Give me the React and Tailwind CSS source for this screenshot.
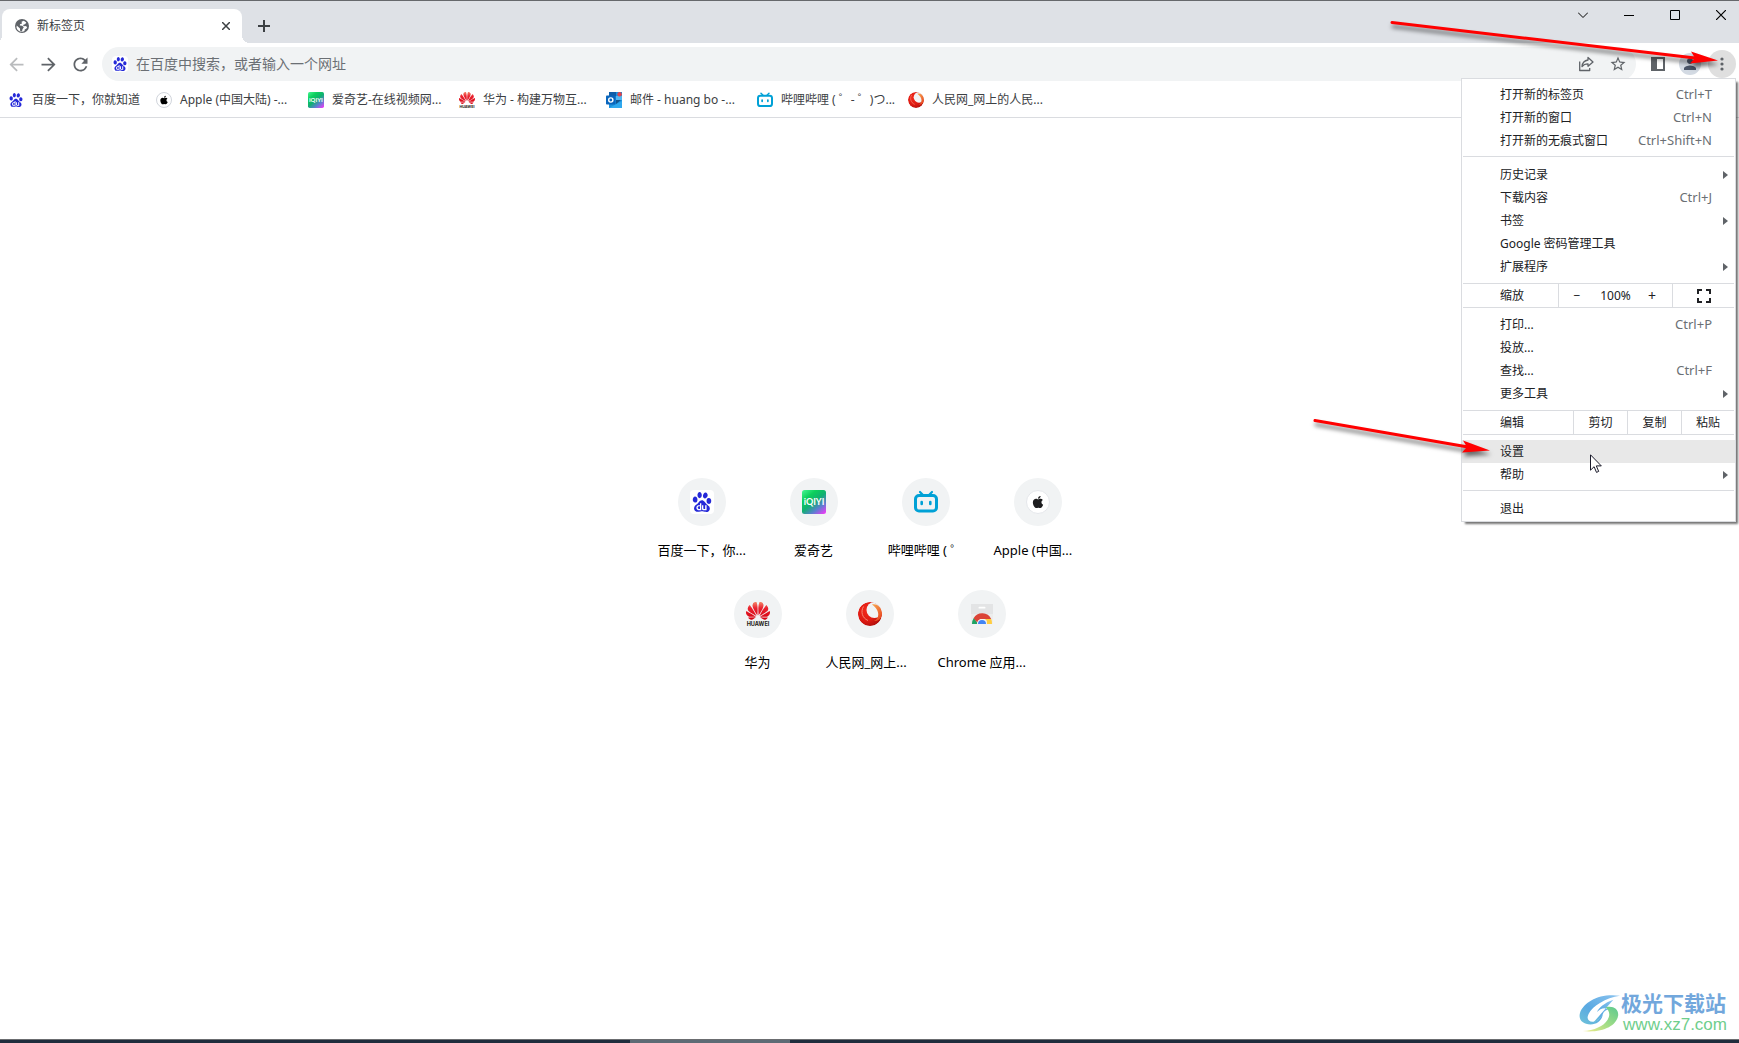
import React from "react";
import { MdArrowBack, MdArrowForward, MdRefresh, MdStarBorder, MdPerson } from "react-icons/md";
import { SiBaidu, SiHuawei } from "react-icons/si";
import { FaApple } from "react-icons/fa";

function BaiduIcon({ large }) {
  return (
    <span className={large ? "grid size-6 place-items-center rounded-sm bg-white" : "grid size-4 place-items-center rounded-sm bg-white"}>
      <SiBaidu className={large ? "size-5 text-[#2529d8]" : "size-3.5 text-[#2529d8]"} />
    </span>
  );
}

function AppleIcon({ large }) {
  return (
    <span className={large ? "grid size-6 place-items-center rounded-full border border-gray-200 bg-white" : "grid size-4 place-items-center rounded-full border border-gray-300 bg-white"}>
      <FaApple className={large ? "size-3.5 text-[#1d1d1f]" : "size-2.5 text-black"} />
    </span>
  );
}

function IqiyiIcon({ large }) {
  return (
    <svg viewBox="0 0 24 24" className={large ? "size-6" : "size-4"} aria-hidden="true">
      <defs>
        <linearGradient id="iqiyi" x1="0.1" y1="0" x2="0.9" y2="1">
          <stop offset="0" stopColor="#3df08a" />
          <stop offset="0.25" stopColor="#0ccf5c" />
          <stop offset="0.5" stopColor="#10b070" />
          <stop offset="0.75" stopColor="#5b7fd0" />
          <stop offset="1" stopColor="#e93df5" />
        </linearGradient>
      </defs>
      <rect width="24" height="24" rx="2.5" fill="url(#iqiyi)" />
      <text x="12" y="15.2" textAnchor="middle" fontSize="9" fontWeight="700" fontFamily="Lato, sans-serif" fill="#fff">iQIYI</text>
    </svg>
  );
}

function BiliIcon({ large }) {
  return (
    <svg viewBox="0 0 24 24" className={large ? "size-6" : "size-4"} fill="none" stroke="#00a1d6" strokeLinecap="round" aria-hidden="true">
      <rect x="1.5" y="5.5" width="21" height="15.5" rx="3.5" strokeWidth="3" />
      <path d="M6 2l3 3M18 2l-3 3" strokeWidth="2.2" />
      <path d="M7.7 12v2M16.3 12v2" strokeWidth="2.6" />
    </svg>
  );
}

function HuaweiIcon({ large }) {
  return (
    <svg viewBox="0 0 24 24" className={large ? "size-6" : "size-4"} aria-hidden="true">
      <defs>
        <linearGradient id="petals" x1="0.5" y1="0" x2="0.5" y2="1">
          <stop offset="0" stopColor="#f58a6c" />
          <stop offset="0.35" stopColor="#ea2330" />
          <stop offset="1" stopColor="#d5000f" />
        </linearGradient>
      </defs>
      <svg x="0" y="-3.2" width="24" height="24" viewBox="0 0 24 24">
        <SiHuawei size={24} style={{ fill: "url(#petals)" }} />
      </svg>
      <text x="12" y="24" textAnchor="middle" fontSize="5.6" fontWeight="700" fontFamily="Inter, sans-serif" fill="#231815">HUAWEI</text>
    </svg>
  );
}

function PeopleIcon({ large }) {
  return (
    <svg viewBox="0 0 24 24" className={large ? "size-6" : "size-4"} aria-hidden="true">
      <defs>
        <radialGradient id="ball" cx="0.35" cy="0.35" r="0.75">
          <stop offset="0" stopColor="#f2291b" />
          <stop offset="0.6" stopColor="#dd1a12" />
          <stop offset="1" stopColor="#a80d0b" />
        </radialGradient>
        <linearGradient id="flare" x1="0.2" y1="0" x2="0.8" y2="1">
          <stop offset="0" stopColor="#f6a04d" />
          <stop offset="1" stopColor="#e8401c" />
        </linearGradient>
        <clipPath id="disc">
          <circle cx="12" cy="12" r="12" />
        </clipPath>
      </defs>
      <g clipPath="url(#disc)">
        <circle cx="12" cy="12" r="12" fill="url(#ball)" />
        <circle cx="16.5" cy="8" r="8" fill="#f1f3f4" />
        <path d="M14 2.500C19 1 25 6 24 13c-1 4-4 6-8 6 5-2 7-10-2-16.500z" fill="url(#flare)" />
        <path d="M5.500 4.500c-3 5-1.500 11.500 4.500 14" fill="none" stroke="#f9a08c" strokeWidth="0.8" />
      </g>
    </svg>
  );
}

function OutlookIcon() {
  return (
    <svg viewBox="0 0 16 16" className="size-4" aria-hidden="true">
      <path d="M3 0h13v16H3z" fill="#1a91dd" />
      <path d="M3 0h7v4H3z" fill="#0f5da8" />
      <path d="M10 4h6v4h-6z" fill="#50b7f2" />
      <path d="M3 16l13-7v7z" fill="#2fa8ee" />
      <path d="M10 8h5l-5 4z" fill="#12548f" />
      <rect y="3.5" width="9.5" height="9" rx="0.8" fill="#0a66bd" />
      <circle cx="4.8" cy="8" r="2.1" fill="none" stroke="#fff" strokeWidth="1.4" />
      <circle cx="13.6" cy="2.2" r="2.2" fill="#e0434b" />
    </svg>
  );
}

function WebStoreIcon() {
  return (
    <svg viewBox="0 0 24 24" className="size-6" aria-hidden="true">
      <rect x="1" y="2" width="22" height="20" fill="#eceded" />
      <rect x="1" y="2" width="22" height="10" fill="#e3e4e5" />
      <rect x="8.5" y="4.8" width="7" height="1.8" rx="0.9" fill="#fff" />
      <path d="M2 22a10 10 0 0 1 2-6.3L8 22z" fill="#1fa463" />
      <path d="M3.6 16.2A10 10 0 0 1 21.2 17H12a5 5 0 0 0-4.7 3.6z" fill="#db4437" />
      <path d="M21.2 17a10 10 0 0 1 .8 5h-6l1-3-2-2z" fill="#ffcd40" />
      <path d="M7 22a5 5 0 0 1 10 0z" fill="#f5f5f5" />
      <path d="M8 22a4 4 0 0 1 8 0z" fill="#4285f4" />
    </svg>
  );
}

function GlobeIcon() {
  return (
    <svg viewBox="0 0 14 14" className="size-3.5" aria-hidden="true">
      <circle cx="7" cy="7" r="7" fill="#5f6368" />
      <path d="M8.800 1.800L6.500 2.800 7 4.500 5 5.200 4.800 6.500l2.400.3 1.600 1.500-1.300 2L7 12.300 5.200 12 5 9.500 1.700 6.500 1.500 8.500C2 11 4 12.800 7 12.800c1 0 1.800-.3 2.500-.7l.2-1.600 1.800-.9.7-1.500-1.700-1-1.800.2L8 5.900l2.300-.8 1-1.700z" fill="#fff" />
    </svg>
  );
}

const bookmarks = [
  { icon: <BaiduIcon />, title: "百度一下，你就知道", fit: "w-[108px]" },
  { icon: <AppleIcon />, title: "Apple (中国大陆) -...", fit: "w-28" },
  { icon: <IqiyiIcon />, title: "爱奇艺-在线视频网...", fit: "w-[111px]" },
  { icon: <HuaweiIcon />, title: "华为 - 构建万物互...", fit: "w-[107px]" },
  { icon: <OutlookIcon />, title: "邮件 - huang bo -...", fit: "w-[111px]" },
  { icon: <BiliIcon />, title: "哔哩哔哩 ( ゜- ゜)つ...", fit: "w-[111px]" },
  { icon: <PeopleIcon />, title: "人民网_网上的人民...", fit: "w-[111px]" },
];

const shortcuts = [
  [
    { icon: <BaiduIcon large />, title: "百度一下，你..." },
    { icon: <IqiyiIcon large />, title: "爱奇艺", center: true },
    { icon: <BiliIcon large />, title: "哔哩哔哩 ( ゜", center: true },
    { icon: <AppleIcon large />, title: "Apple (中国..." },
  ],
  [
    { icon: <HuaweiIcon large />, title: "华为", center: true },
    { icon: <PeopleIcon large />, title: "人民网_网上..." },
    { icon: <WebStoreIcon />, title: "Chrome 应用..." },
  ],
];

function MenuItem({ label, keys, sub, active }) {
  return (
    <button
      role="menuitem"
      className={
        active
          ? "flex h-[23px] w-full items-center justify-between bg-[#e8e8e8] pl-[38px] text-left"
          : "flex h-[23px] w-full items-center justify-between pl-[38px] text-left"
      }
    >
      <span>{label}</span>
      {keys && <span className="pr-[23px] text-[13px] text-[#6b6f74]">{keys}</span>}
      {sub && (
        <svg viewBox="0 0 5 8" className="mr-[7px] h-2 w-[5px]" fill="#5f6368" aria-hidden="true">
          <path d="M0 0l5 4-5 4z" />
        </svg>
      )}
    </button>
  );
}

function Separator() {
  return <div role="separator" className="mx-px mt-1 mb-1.5 h-px bg-[#dadce0]" />;
}

function Menu() {
  return (
    <div
      role="menu"
      className="absolute top-full right-0 z-10 w-[275px] border border-[#dadce0] bg-white pt-1 pb-px text-xs text-[#202124] shadow-[3px_3px_2px_-1px_rgba(0,0,0,0.55)]"
    >
      <MenuItem label="打开新的标签页" keys="Ctrl+T" />
      <MenuItem label="打开新的窗口" keys="Ctrl+N" />
      <MenuItem label="打开新的无痕式窗口" keys="Ctrl+Shift+N" />
      <Separator />
      <MenuItem label="历史记录" sub />
      <MenuItem label="下载内容" keys="Ctrl+J" />
      <MenuItem label="书签" sub />
      <MenuItem label="Google 密码管理工具" />
      <MenuItem label="扩展程序" sub />
      <div className="mx-px mt-[5px] mb-[5px] flex h-[25px] items-stretch border-y border-[#dadce0]">
        <span className="flex flex-1 items-center pl-[37px]">缩放</span>
        <div className="flex w-[115px] items-center justify-between border-x border-[#dadce0] px-3.5">
          <button aria-label="缩小" className="w-2">−</button>
          <span className="pl-1">100%</span>
          <button aria-label="放大" className="w-3 text-sm">+</button>
        </div>
        <button aria-label="全屏" className="grid w-[61px] place-items-center">
          <svg viewBox="0 0 14 14" className="size-3.5" fill="none" stroke="#202124" strokeWidth="2" aria-hidden="true">
            <path d="M1 5V1h4M9 1h4v4M13 9v4H9M5 13H1V9" />
          </svg>
        </button>
      </div>
      <MenuItem label="打印..." keys="Ctrl+P" />
      <MenuItem label="投放..." />
      <MenuItem label="查找..." keys="Ctrl+F" />
      <MenuItem label="更多工具" sub />
      <div className="mx-px mt-[5px] mb-[5px] flex h-[25px] items-stretch border-y border-[#dadce0]">
        <span className="flex flex-1 items-center pl-[37px]">编辑</span>
        <button className="w-[54px] border-l border-[#dadce0]">剪切</button>
        <button className="w-[54px] border-l border-[#dadce0]">复制</button>
        <button className="w-[53px] border-l border-[#dadce0]">粘贴</button>
      </div>
      <div className="relative">
        <MenuItem label="设置" active />
        <svg viewBox="0 0 12 19" className="absolute top-3.5 left-32 z-10 h-[19px] w-3" fill="#fff" stroke="#1a1a2a" aria-hidden="true">
          <path d="M.5.8v15.400l3.600-3.500 2.400 5.700 2.200-1-2.400-5.500h5z" />
        </svg>
        <svg viewBox="0 0 190 50" className="pointer-events-none absolute -top-6 right-[244px] h-[50px] w-[190px] drop-shadow-[1px_4px_2px_rgba(0,0,0,0.55)]" aria-hidden="true">
          <path d="M14 4.500L167 31" stroke="#f00" strokeWidth="3" strokeLinecap="round" />
          <path d="M162 24.500l27 10-28 2 5-5.500z" fill="#f00" />
        </svg>
      </div>
      <MenuItem label="帮助" sub />
      <Separator />
      <MenuItem label="退出" />
    </div>
  );
}

function TabStrip() {
  return (
    <div className="flex h-[43px] border-t border-[#66686c] bg-[#dee1e6] pl-0.5">
      <div className="relative mt-2 flex w-60 items-center rounded-t-lg bg-white pr-2 pl-[13px]">
        <GlobeIcon />
        <span className="flex-1 pl-2 text-xs text-[#3c4043]">新标签页</span>
        <button aria-label="关闭标签页" className="grid size-4 place-items-center">
          <svg viewBox="0 0 8 8" className="size-2" stroke="#3c4043" strokeWidth="1.500" aria-hidden="true">
            <path d="M0 0l8 8M8 0L0 8" />
          </svg>
        </button>
        <span className="absolute bottom-0 -left-2 size-2 bg-[radial-gradient(circle_at_0_0,transparent_8px,white_8px)]" />
        <span className="absolute -right-2 bottom-0 size-2 bg-[radial-gradient(circle_at_100%_0,transparent_8px,white_8px)]" />
      </div>
      <button aria-label="打开新的标签页" className="mt-2 ml-2 grid w-7 place-items-center">
        <svg viewBox="0 0 12 12" className="size-3" stroke="#3c4043" strokeWidth="2" aria-hidden="true">
          <path d="M6 0v12M0 6h12" />
        </svg>
      </button>
      <div className="ml-auto flex h-7 text-black">
        <button aria-label="搜索标签页" className="flex w-[46px] items-center justify-end pr-[13px]">
          <svg viewBox="0 0 10 10" className="size-2.5" fill="none" stroke="currentColor" aria-hidden="true">
            <path d="M0 2.500l5 5 5-5" />
          </svg>
        </button>
        <button aria-label="最小化" className="flex w-[46px] items-center justify-end pr-[13px]">
          <svg viewBox="0 0 10 10" className="size-2.5" stroke="currentColor" aria-hidden="true">
            <path d="M0 5.500h10" />
          </svg>
        </button>
        <button aria-label="最大化" className="flex w-[46px] items-center justify-end pr-[13px]">
          <svg viewBox="0 0 10 10" className="size-2.5" fill="none" stroke="currentColor" aria-hidden="true">
            <path d="M.5.5h9v9h-9z" />
          </svg>
        </button>
        <button aria-label="关闭" className="flex w-[46px] items-center justify-end pr-[13px]">
          <svg viewBox="0 0 10 10" className="size-2.5" stroke="currentColor" strokeWidth="1.200" aria-hidden="true">
            <path d="M0 0l10 10M10 0L0 10" />
          </svg>
        </button>
      </div>
    </div>
  );
}

function Toolbar() {
  return (
    <div className="flex items-center pt-1 pr-[3px]">
      <button aria-label="后退" className="grid w-8 place-items-center text-[#babcbe]">
        <MdArrowBack className="size-[21px]" />
      </button>
      <button aria-label="前进" className="grid w-8 place-items-center text-[#5f6368]">
        <MdArrowForward className="size-[21px]" />
      </button>
      <button aria-label="重新加载" className="grid w-8 place-items-center text-[#5f6368]">
        <MdRefresh className="size-[21px]" />
      </button>
      <div className="ml-1.5 flex h-[34px] flex-1 items-center gap-1 rounded-full bg-[#f1f3f4] pr-1 pl-2.5">
        <BaiduIcon />
        <input
          aria-label="地址栏"
          placeholder="在百度中搜索，或者输入一个网址"
          className="min-w-0 flex-1 bg-transparent pl-1 text-sm outline-none placeholder:text-[#6b6f74]"
        />
        <button aria-label="分享" className="grid size-7 place-items-center">
          <svg viewBox="0 0 16 16" className="size-4" fill="none" stroke="#5f6368" strokeWidth="1.300" strokeLinejoin="round" aria-hidden="true">
            <path d="M1.700 5.500v9h10v-2.500" />
            <path d="M10 1.500l5 4.500-5 4.200V7.800c-3 0-4.500.8-6 2.700.4-3.600 2.500-6 6-6.500z" />
          </svg>
        </button>
        <button aria-label="为此页添加书签" className="grid size-7 place-items-center text-[#5f6368]">
          <MdStarBorder className="size-[18px]" />
        </button>
      </div>
      <div className="relative ml-2 flex gap-1">
        <button aria-label="侧边栏" className="grid size-7 place-items-center">
          <svg viewBox="0 0 14 14" className="size-3.5" aria-hidden="true">
            <path d="M1 1h12v12H1z" fill="#fff" stroke="#5f6368" strokeWidth="2" />
            <path d="M1 1h5v12H1z" fill="#5f6368" />
          </svg>
        </button>
        <button aria-label="个人资料" className="grid size-7 place-items-center">
          <span className="grid size-[22px] place-items-center rounded-full bg-[#d3dae3]">
            <MdPerson className="size-[18px] text-[#4a5568]" />
          </span>
        </button>
        <button aria-label="自定义及控制" aria-expanded="true" className="grid size-7 place-items-center rounded-full bg-[#dfdfdf]">
          <svg viewBox="0 0 4 14" className="h-3.5 w-1" fill="#5f6368" aria-hidden="true">
            <circle cx="2" cy="2" r="1.600" />
            <circle cx="2" cy="7" r="1.600" />
            <circle cx="2" cy="12" r="1.600" />
          </svg>
        </button>
        <Menu />
      </div>
    </div>
  );
}

function Watermark() {
  return (
    <div className="absolute right-3 bottom-1 flex items-end">
      <svg viewBox="0 0 44 42" className="mb-0.5 h-10 w-[42px]" aria-hidden="true">
        <defs>
          <linearGradient id="swirlBlue" x1="1" y1="0" x2="0" y2="1">
            <stop offset="0" stopColor="#8cc4f0" />
            <stop offset="0.6" stopColor="#5aa9e2" />
            <stop offset="1" stopColor="#6fc3d8" />
          </linearGradient>
          <linearGradient id="swirlGreen" x1="1" y1="0" x2="0" y2="1">
            <stop offset="0" stopColor="#5cc98f" />
            <stop offset="0.5" stopColor="#9fdc86" />
            <stop offset="1" stopColor="#f2ec8a" />
          </linearGradient>
        </defs>
        <path d="M43 3C28 5 14 14 10 22c-3 6 1 9 6 8 5-1 7-5 9-8-1 7-6 11-13 11C4 33-1 28 1 21 5 9 22 0 43 3z" fill="url(#swirlBlue)" />
        <path d="M36 7C27 10 20 16 19 20c3-4 8-5 12-3-3 1-5 2-6 5-2 4-5 8-10 9" fill="url(#swirlBlue)" />
        <path d="M28 15c8-2 14 2 13 9C39 35 24 42 4 40c12-1 22-5 26-12 3-5 2-9-2-13z" fill="url(#swirlGreen)" />
      </svg>
      <div>
        <div className="text-[21px] leading-6 font-bold text-[#72a7dc]">极光下载站</div>
        <a href="#" className="block pl-0.5 font-[Liberation_Sans,sans-serif] text-[17px] leading-5 font-medium text-[#6fce8c]">www.xz7.com</a>
      </div>
    </div>
  );
}

export default function App() {
  return (
    <div lang="zh-CN" className="relative flex min-h-screen flex-col overflow-hidden bg-white font-['Noto_Sans','Noto_Sans_CJK_SC',sans-serif]">
      <header>
        <TabStrip />
        <Toolbar />
        <nav aria-label="书签栏" className="flex h-[37px] items-center gap-4 border-b border-[#dadce0] pt-px pl-2 text-xs whitespace-nowrap text-[#3c4043]">
          {bookmarks.map((b) => (
            <a key={b.title} href="#" className="flex items-center gap-2">
              {b.icon}
              <span className={b.fit}>{b.title}</span>
            </a>
          ))}
        </nav>
      </header>

      <main className="relative flex flex-1 flex-col items-center pt-[360px]">
        {shortcuts.map((row, i) => (
          <div key={i} className="flex h-28">
            {row.map((s) => (
              <a key={s.title} href="#" className="flex w-28 flex-col items-center text-[13px] leading-5 text-black">
                <span className="mb-3.5 grid size-12 place-items-center rounded-full bg-[#f1f3f4]">{s.icon}</span>
                <span className={s.center ? "w-[88px] text-center whitespace-nowrap" : "w-[88px] text-left whitespace-nowrap"}>{s.title}</span>
              </a>
            ))}
          </div>
        ))}
        <Watermark />
      </main>

      <footer className="flex h-1 justify-center border-t border-[#6b6d70] bg-[#1f2d3d]">
        <div className="mr-[319px] w-40 bg-[#5d6b75]" />
      </footer>

      <svg viewBox="0 0 360 90" className="pointer-events-none absolute top-0 right-0 z-20 h-[90px] w-[360px] drop-shadow-[1px_4px_2px_rgba(0,0,0,0.55)]" aria-hidden="true">
        <path d="M13 22.500L316 58" stroke="#f00" strokeWidth="3" strokeLinecap="round" />
        <path d="M312 51.500l27 9-28 3 5-5.500z" fill="#f00" />
      </svg>
    </div>
  );
}
